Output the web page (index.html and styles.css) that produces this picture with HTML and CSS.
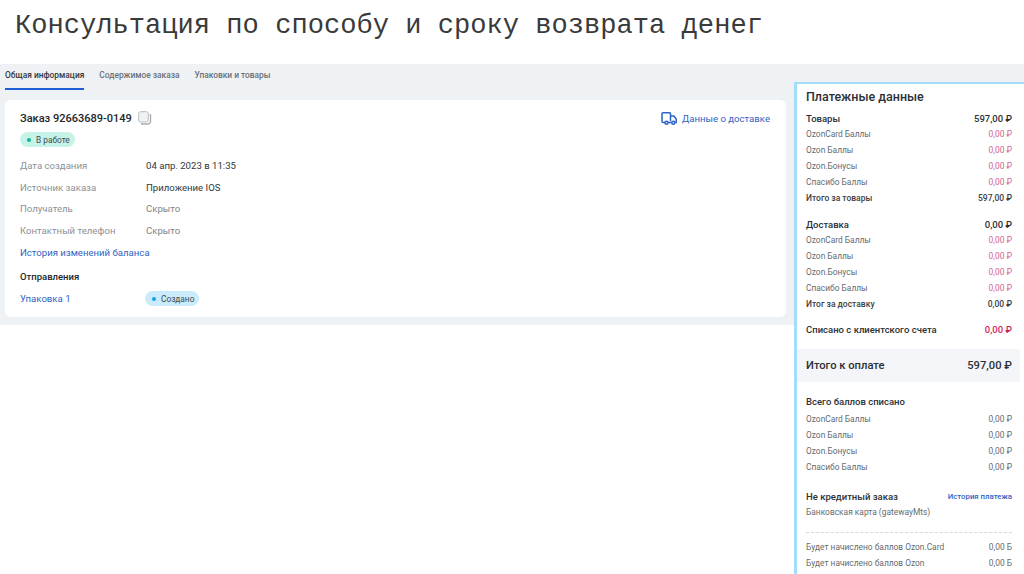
FILE: index.html
```html
<!DOCTYPE html>
<html lang="ru">
<head>
<meta charset="utf-8">
<title>Консультация</title>
<link rel="stylesheet" href="styles.css">
</head>
<body>
<header class="slide-title"><h1>Консультация по способу и сроку возврата денег</h1></header>
<div class="content">
  <main class="main">
    <nav class="tabs">
      <span class="tab active">Общая информация</span>
      <span class="tab">Содержимое заказа</span>
      <span class="tab">Упаковки и товары</span>
    </nav>
    <section class="card">
      <div class="card-head">
        <div class="order-title">
          <h2>Заказ 92663689-0149</h2>
          <svg class="copy" width="14" height="14" viewBox="0 0 14 14" fill="none"><path d="M12.500 3v7.500a2.500 2.500 0 0 1-2.500 2.500H3" stroke="#a9acb0" stroke-width="1.400"/><rect x=".7" y=".7" width="9.600" height="10.300" rx="1.800" fill="#f1f2f3" stroke="#b9bcc0"/></svg>
        </div>
        <a class="delivery-link">
          <svg width="16" height="13" viewBox="0 0 16 13" fill="none" stroke="#2b63c6" stroke-width="1.500"><path d="M4 10.500H2.200A1.200 1.200 0 0 1 1 9.300V1.800A1 1 0 0 1 2 .8h6.500a1 1 0 0 1 1 1V9"/><path d="M9.500 4h3.300l2.400 3v3.500h-1"/><circle cx="5.500" cy="10.700" r="1.500"/><circle cx="12.300" cy="10.700" r="1.500"/><path d="M7 10.500h3.800"/></svg>
          Данные о доставке
        </a>
      </div>
      <span class="badge badge-green"><i></i>В работе</span>
      <dl class="info">
        <div class="info-row"><dt>Дата создания</dt><dd>04 апр. 2023 в 11:35</dd></div>
        <div class="info-row"><dt>Источник заказа</dt><dd>Приложение IOS</dd></div>
        <div class="info-row"><dt>Получатель</dt><dd class="muted">Скрыто</dd></div>
        <div class="info-row"><dt>Контактный телефон</dt><dd class="muted">Скрыто</dd></div>
      </dl>
      <a class="link balance">История изменений баланса</a>
      <h3>Отправления</h3>
      <div class="info-row pack"><a class="link">Упаковка 1</a><span class="badge badge-blue"><i></i>Создано</span></div>
    </section>
  </main>
  <div class="side">
    <aside class="panel">
      <h2>Платежные данные</h2>
      <div class="group">
        <div class="row strong"><span>Товары</span><span>597,00 ₽</span></div>
        <div class="row"><span>OzonCard Баллы</span><span class="red">0,00 ₽</span></div>
        <div class="row"><span>Ozon Баллы</span><span class="red">0,00 ₽</span></div>
        <div class="row"><span>Ozon.Бонусы</span><span class="red">0,00 ₽</span></div>
        <div class="row"><span>Спасибо Баллы</span><span class="red">0,00 ₽</span></div>
        <div class="row total"><span>Итого за товары</span><span>597,00 ₽</span></div>
      </div>
      <div class="group group-last">
        <div class="row strong"><span>Доставка</span><span>0,00 ₽</span></div>
        <div class="row"><span>OzonCard Баллы</span><span class="red">0,00 ₽</span></div>
        <div class="row"><span>Ozon Баллы</span><span class="red">0,00 ₽</span></div>
        <div class="row"><span>Ozon.Бонусы</span><span class="red">0,00 ₽</span></div>
        <div class="row"><span>Спасибо Баллы</span><span class="red">0,00 ₽</span></div>
        <div class="row total"><span>Итог за доставку</span><span>0,00 ₽</span></div>
      </div>
      <div class="row strong"><span>Списано с клиентского счета</span><span class="deep-red">0,00 ₽</span></div>
      <div class="pay"><span>Итого к оплате</span><span>597,00 ₽</span></div>
      <div class="row strong points"><span>Всего баллов списано</span></div>
      <div class="row"><span>OzonCard Баллы</span><span>0,00 ₽</span></div>
      <div class="row"><span>Ozon Баллы</span><span>0,00 ₽</span></div>
      <div class="row"><span>Ozon.Бонусы</span><span>0,00 ₽</span></div>
      <div class="row"><span>Спасибо Баллы</span><span>0,00 ₽</span></div>
      <div class="row strong credit"><span>Не кредитный заказ</span><a class="link small">История платежа</a></div>
      <div class="row"><span>Банковская карта (gatewayMts)</span></div>
      <div class="row accrual"><span>Будет начислено баллов Ozon.Card</span><span>0,00 Б</span></div>
      <div class="row"><span>Будет начислено баллов Ozon</span><span>0,00 Б</span></div>
    </aside>
  </div>
</div>
</body>
</html>
```
FILE: styles.css
```css
* { box-sizing: border-box; }
html, body { margin: 0; height: 100%; }
body { background: #fff; font-family: Roboto, "Noto Sans", sans-serif; overflow: hidden; color: #22262b; }
a { text-decoration: none; }
.slide-title { height: 64px; padding: 10px 0 0 15px; }
.slide-title h1 { margin: 0; font: 400 27.100px/32px "Liberation Mono", monospace; color: #3a3a3a; white-space: nowrap; }
.content { display: flex; align-items: flex-start; }
.main { width: 794px; height: 261px; background: #eff2f5; padding: 0 8px 0 5px; }
.tabs { display: flex; gap: 15px; height: 36px; }
.tab { font-size: 8.400px; line-height: 22px; color: #6a7078; height: 26px; font-weight: 500; }
.tab.active { color: #33383e; border-bottom: 2px solid #1f5fd6; }
.card { background: #fff; border-radius: 6px; height: 217px; padding: 10px 16px 0 15px; }
.card-head { display: flex; justify-content: space-between; align-items: center; height: 16px; }
.order-title { display: flex; align-items: center; gap: 6px; }
.order-title h2 { margin: 0; font-size: 11px; font-weight: 500; color: #22262b; }
.delivery-link { display: flex; align-items: center; gap: 5px; font-size: 9.600px; color: #2f63c2; }
.badge { display: inline-flex; align-items: center; gap: 5px; height: 15px; border-radius: 8px; padding: 0 5px 0 7px; font-size: 8.300px; color: #444a50; }
.badge i { width: 4px; height: 4px; border-radius: 50%; }
.badge-green { background: #c6f3e8; margin-top: 6px; }
.badge-green i { background: #10b795; }
.badge-blue { background: #c9ebfb; }
.badge-blue i { background: #1aa0e6; }
.info { margin: 7.500px 0 0; }
.info-row { display: flex; align-items: center; height: 21.800px; font-size: 9.600px; }
.info-row dt { width: 126px; color: #8c9196; }
.info-row dd { margin: 0; color: #33373c; }
.info-row dd.muted { color: #7e8388; }
.link { color: #2f63c2; }
.balance { display: block; font-size: 9.600px; line-height: 21px; }
.card h3 { margin: 5px 0 0; font-size: 9.500px; line-height: 17px; font-weight: 500; color: #22262b; }
.pack { margin-top: 3px; }
.pack .link { width: 125px; }
.side { flex: 1; background: linear-gradient(#eff2f5 18px, #fff 18px); padding-top: 18px; height: 510px; }
.panel { height: 492px; background: #fff; border-left: 3px solid #a4dcfb; border-top: 2px solid #a4dcfb; padding: 5px 12px 0 9px; font-size: 8.400px; color: #666b70; overflow: hidden; }
.panel h2 { margin: 0 0 5px; font-size: 12.500px; line-height: 16px; font-weight: 500; color: #2c3035; }
.group { margin-bottom: 10px; }
.group-last { margin-bottom: 9px; }
.row { display: flex; justify-content: space-between; align-items: center; height: 16px; white-space: nowrap; }
.row.strong { color: #2c3035; font-weight: 500; font-size: 9.500px; }
.row.total { color: #3a3e43; font-weight: 500; font-size: 8.500px; }
.red { color: #d0668d; }
.deep-red { color: #cf1f5e; font-size: 9.500px; }
.pay { display: flex; justify-content: space-between; align-items: center; height: 33px; margin: 12px -8px 0 -9px; padding: 0 8px 0 9px; background: #f3f5f8; font-size: 11.200px; font-weight: 500; color: #2c3035; }
.points { margin: 11px 0 2px; }
.credit { margin-top: 13px; }
.small { font-size: 7.800px; }
.accrual { margin-top: 19px; position: relative; }
.accrual::before { content: ""; position: absolute; left: 0; right: 0; top: -7px; border-top: 1px dashed #d5d8db; }
```
